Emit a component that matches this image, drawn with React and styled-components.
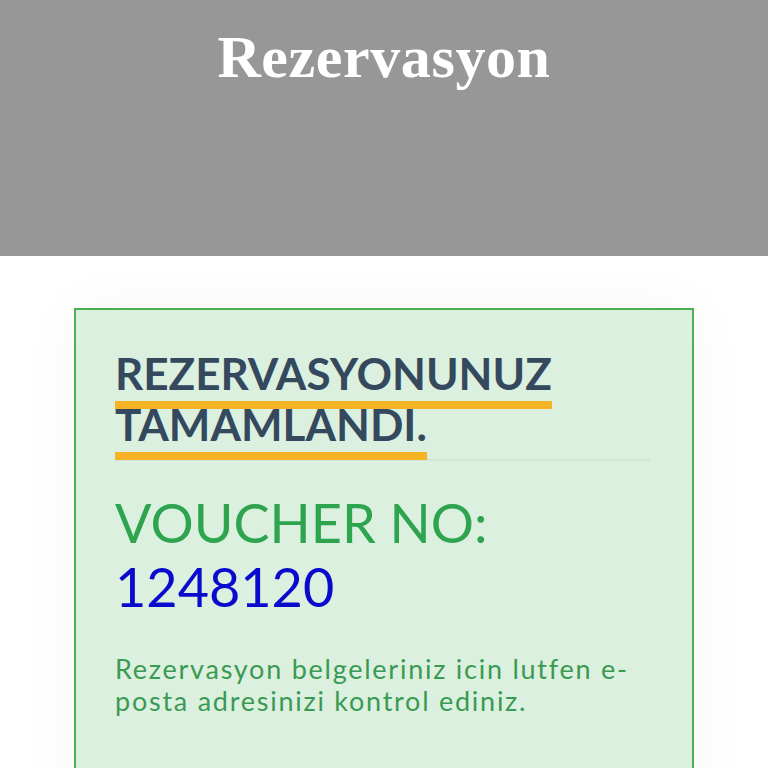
import React from 'react';
import styled, { createGlobalStyle } from 'styled-components';

const GlobalStyle = createGlobalStyle`
  html, body {
    margin: 0;
    padding: 0;
    background: #ffffff;
  }
  body {
    font-family: Lato, "Open Sans", sans-serif;
  }
`;

const App = () => (
  <Page>
    <GlobalStyle />
    <Banner>
      <BannerTitle>Rezervasyon</BannerTitle>
    </Banner>
    <Content>
      <SuccessCard>
        <Heading>
          <Marked>REZERVASYONUNUZ TAMAMLANDI.</Marked>
        </Heading>
        <VoucherLabel>VOUCHER NO:</VoucherLabel>
        <VoucherNumber>1248120</VoucherNumber>
        <Note>Rezervasyon belgeleriniz icin lutfen e-posta adresinizi kontrol ediniz.</Note>
      </SuccessCard>
    </Content>
  </Page>
);
export default App;

const Page = styled.div`
  width: 768px;
  height: 768px;
  overflow: hidden;
`;

const Banner = styled.header`
  height: 256px;
  background: #979797;
  display: flex;
  justify-content: center;
  align-items: flex-start;
  box-sizing: border-box;
  padding-top: 22px;
`;

const BannerTitle = styled.h1`
  margin: 0;
  font-family: "Liberation Serif", serif;
  font-weight: 700;
  font-size: 60px;
  line-height: 70px;
  letter-spacing: 0.6px;
  color: #ffffff;
`;

const Content = styled.main`
  padding: 52px 74px 0;
`;

const SuccessCard = styled.section`
  background: #dcf0df;
  border: 2px solid #4caf50;
  padding: 38px 42px 60px 39px;
  min-height: 500px;
  box-shadow: 0 0 60px rgba(0, 0, 0, 0.035);
`;

const Heading = styled.h2`
  margin: 0 0 30px;
  padding-bottom: 9px;
  font-family: Lato, sans-serif;
  font-weight: 700;
  font-size: 44px;
  line-height: 51px;
  color: #34495e;
  border-bottom: 2px solid #d3e6d5;
`;

const Marked = styled.span`
  padding-bottom: 2px;
  border-bottom: 8px solid #f5b325;
`;

const VoucherLabel = styled.div`
  font-family: Lato, sans-serif;
  font-weight: 400;
  font-size: 54px;
  line-height: 64px;
  color: #2ea44f;
`;

const VoucherNumber = styled.div`
  font-family: Lato, sans-serif;
  font-weight: 400;
  font-size: 54px;
  line-height: 64px;
  color: #0a0acc;
  margin-bottom: 34px;
`;

const Note = styled.p`
  margin: 0;
  font-family: Lato, sans-serif;
  font-size: 27px;
  line-height: 32px;
  letter-spacing: 1.75px;
  color: #3a9a52;
`;
